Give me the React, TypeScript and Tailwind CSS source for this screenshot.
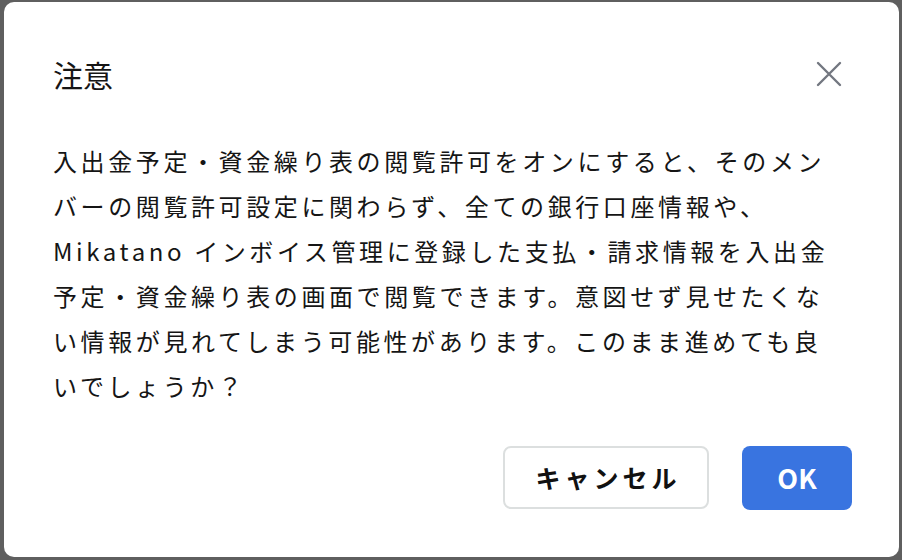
import React from "react";

export default function App() {
  return (
    <div className="w-[902px] h-[560px] bg-[#5f5f5f] overflow-hidden pt-[2px] pl-[4px] [font-family:'Noto_Sans_CJK_JP','Noto_Sans',sans-serif]">
      <div className="w-[895px] h-[555px] bg-white rounded-[10px] px-[49px] flex flex-col">
        <div className="mt-[50px] h-[44px] flex items-center justify-between">
          <h2 className="text-[30px] leading-none text-[#151515] font-normal">注意</h2>
          <button className="w-[44px] h-[44px] -mr-[1px] flex items-center justify-center">
            <svg width="26" height="26" viewBox="0 0 26 26" fill="none" stroke="#737780" strokeWidth="2.4" strokeLinecap="round">
              <path d="M2 2 L24 24 M24 2 L2 24" />
            </svg>
          </button>
        </div>
        <p className="mt-[42px] mr-[15px] text-[24px] leading-[45px] tracking-[3.6px] text-[#151515]">
          入出金予定・資金繰り表の閲覧許可をオンにすると、そのメンバーの閲覧許可設定に関わらず、全ての銀行口座情報や、Mikatano インボイス管理に登録した支払・請求情報を入出金予定・資金繰り表の画面で閲覧できます。意図せず見せたくない情報が見れてしまう可能性があります。このまま進めても良いでしょうか？
        </p>
        <div className="mt-auto mb-[47px] -mr-[2px] flex justify-end gap-[33px]">
          <button className="w-[206px] h-[63px] rounded-[8px] border-2 border-[#dcdfdf] bg-white text-[25px] font-bold tracking-[4px] pl-[4px] text-[#111]">
            キャンセル
          </button>
          <button className="w-[110px] h-[64px] rounded-[8px] bg-[#3974e0] text-[27px] font-bold text-white">
            OK
          </button>
        </div>
      </div>
    </div>
  );
}
